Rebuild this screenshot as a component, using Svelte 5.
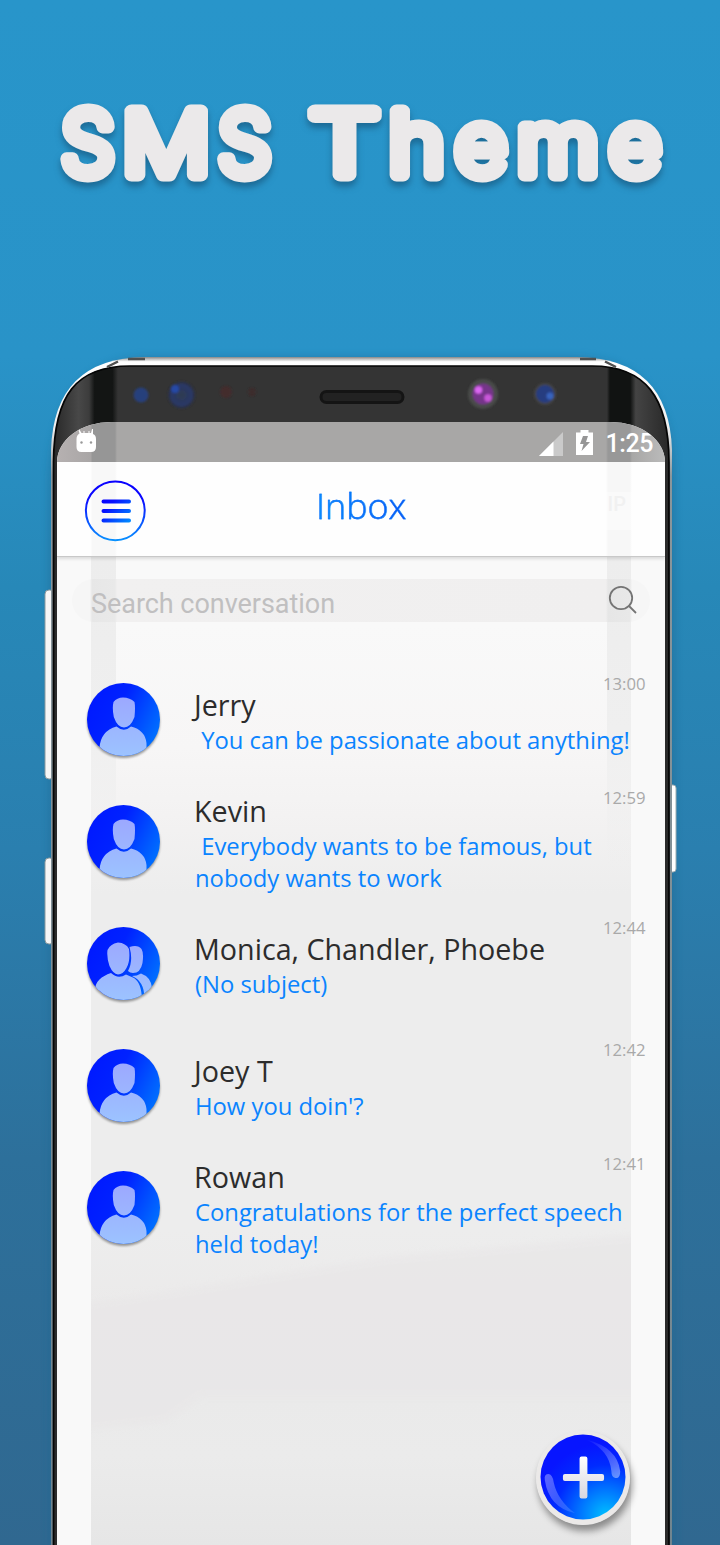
<script>
  const title = [
    { c: 'S', x: 88, s: 0.96 },
    { c: 'M', x: 166.3, s: 1.11 },
    { c: 'S\u00a0', x: 245, s: 0.96 },
    { c: 'T', x: 344.5, s: 1.25 },
    { c: 'h', x: 416.8, s: 1.08 },
    { c: 'e', x: 481, s: 1.03 },
    { c: 'm', x: 557.8, s: 1.07 },
    { c: 'e', x: 635, s: 1.03 }
  ];

  const conversations = [
    { name: 'Jerry', time: '13:00', lines: ['\u00a0You can be passionate about anything!'] },
    { name: 'Kevin', time: '12:59', lines: ['\u00a0Everybody wants to be famous, but', 'nobody wants to work'] },
    { name: 'Monica, Chandler, Phoebe', time: '12:44', lines: ['(No subject)'], group: true },
    { name: 'Joey T', time: '12:42', lines: ["How you doin'?"] },
    { name: 'Rowan', time: '12:41', lines: ['Congratulations for the perfect speech', 'held today!'] }
  ];
</script>

<div class="page">
  <h1>
    <svg width="720" height="357" viewBox="0 0 720 357">
      {#each title as g}
        <text transform="translate({g.x} 175) scale({g.s} 1)" text-anchor={g.c.length > 1 ? 'start' : 'middle'} x={g.c.length > 1 ? -28.2 : 0}>{g.c}</text>
      {/each}
    </svg>
  </h1>

  <svg class="frame" width="720" height="1545" viewBox="0 0 720 1545">
    <defs>
      <linearGradient id="metal" x1="0" x2="0" y1="357" y2="1545" gradientUnits="userSpaceOnUse">
        <stop offset="0" stop-color="#888" /><stop offset=".004" stop-color="#fff" />
        <stop offset=".06" stop-color="#eee" /><stop offset=".1" stop-color="#8b969b" /><stop offset="1" stop-color="#71858f" />
      </linearGradient>
      <linearGradient id="glass" x1="54" x2="669" y1="0" y2="0" gradientUnits="userSpaceOnUse">
        <stop offset="0" stop-color="#292929" /><stop offset=".04" stop-color="#484848" /><stop offset=".057" stop-color="#3c3c3c" />
        <stop offset=".066" stop-color="#131514" /><stop offset=".095" stop-color="#131514" /><stop offset=".104" stop-color="#343434" />
        <stop offset=".899" stop-color="#343434" /><stop offset=".904" stop-color="#111312" /><stop offset=".937" stop-color="#111312" />
        <stop offset=".946" stop-color="#444" /><stop offset="1" stop-color="#282828" />
      </linearGradient>
      <radialGradient id="lens"><stop offset="0" stop-color="#303b50" /><stop offset=".75" stop-color="#293868" /><stop offset="1" stop-color="#292f3d" /></radialGradient>
      <filter id="soft" x="-10%" y="-30%" width="120%" height="160%"><feGaussianBlur stdDeviation="1.2" /></filter>
      <filter id="shade" x="-10%" y="-5%" width="120%" height="110%"><feGaussianBlur stdDeviation="4" /></filter>
    </defs>
    <path d="M49 1560V480Q53 357 150 357H575Q674 358 675 480V1560Z" fill="#1d6690" opacity=".45" filter="url(#shade)" />
    <rect x="45" y="590" width="9" height="189" rx="4" fill="#f6f6f6" stroke="#8a999e" />
    <rect x="45" y="858" width="9" height="86" rx="4" fill="#f6f6f6" stroke="#8a999e" />
    <rect x="668" y="785" width="8" height="87" rx="3" fill="#fff" stroke="#9faeb3" />
    <path d="M51 1560V450Q54 358 145 357H577Q669 358 672 450V1560Z" fill="url(#metal)" />
    <path d="M53.500 1560V462C54 395 76 366 130 366H592C645 366 669 397 669 462V1560Z" fill="url(#glass)" stroke="#050505" stroke-width="1.700" />
    <path d="M107 367L118 361.500M128 359H145M580 359H596M605 361.500L616 367" fill="none" stroke="#505050" stroke-width="2.500" />
    <rect x="321" y="391.500" width="82" height="11" rx="5.500" fill="#222" stroke="#141414" stroke-width="3" />
    <g filter="url(#soft)">
      <circle cx="141" cy="395" r="7.500" fill="#28417c" />
      <circle cx="181.500" cy="395" r="13.500" fill="url(#lens)" />
      <circle cx="175" cy="389" r="4" fill="#2848a5" />
      <circle cx="226" cy="392" r="6" fill="#48282a" opacity=".7" />
      <circle cx="252" cy="392" r="4" fill="#40292a" opacity=".7" />
      <circle cx="483" cy="394" r="15" fill="#484b48" />
      <circle cx="483" cy="394" r="10.500" fill="#76358a" />
      <circle cx="478.500" cy="390" r="3.700" fill="#db66f2" />
      <circle cx="488" cy="398" r="3.700" fill="#c958da" />
      <circle cx="545" cy="394" r="11" fill="#454545" />
      <circle cx="545" cy="394" r="9" fill="#283d80" />
      <circle cx="550" cy="396" r="3.500" fill="#3864bd" />
    </g>
  </svg>

  <main class="screen">
    <svg class="sheen" width="608" height="1123" viewBox="0 0 608 1123">
      <defs>
        <linearGradient id="panel" x1="0" x2="0" y1="0" y2="1123" gradientUnits="userSpaceOnUse">
          <stop offset=".18" stop-color="#f9f9f9" /><stop offset=".29" stop-color="#f7f6f6" /><stop offset=".35" stop-color="#f3f2f2" />
          <stop offset=".42" stop-color="#ededed" /><stop offset=".72" stop-color="#ededed" /><stop offset=".79" stop-color="#ebeaea" />
          <stop offset=".87" stop-color="#eaeaea" /><stop offset=".92" stop-color="#ebebeb" /><stop offset="1" stop-color="#e6e6e6" />
        </linearGradient>
        <linearGradient id="strip" x1="0" x2="0" y1="135" y2="450" gradientUnits="userSpaceOnUse">
          <stop offset="0" stop-color="#ededed" /><stop offset=".55" stop-color="#efefef" /><stop offset="1" stop-color="#ededed" stop-opacity="0" />
        </linearGradient>
        <filter id="edge"><feGaussianBlur stdDeviation="3" /></filter>
        <clipPath id="inner"><rect x="34" y="135" width="540" height="988" /></clipPath>
      </defs>
      <rect x="34" y="135" width="540" height="988" fill="url(#panel)" />
      <g clip-path="url(#inner)"><path d="M20 882L120 868L330 835L590 812V975H145L110 1000L20 1010Z" fill="#e8e6e7" opacity=".6" filter="url(#edge)" /></g>
      <rect x="34" y="135" width="25" height="315" fill="url(#strip)" />
      <rect x="550" y="135" width="24" height="315" fill="url(#strip)" />
    </svg>

    <div class="status">
      <svg class="robot" width="20" height="24" viewBox="0 0 20 24">
        <path d="M3 0l2.500 4h2V2h1v2h4V2h1v2h1.500L16 0h1v5q3 1 3 5v8q0 5-5 5H5.500q-5 0-5-5v-8q0-4 3-5.500L2.500 1z" fill="#fff" />
        <circle cx="5.500" cy="13.500" r="1.200" fill="#999" /><circle cx="15" cy="13.500" r="1.200" fill="#999" />
      </svg>
      <svg width="24" height="24" viewBox="0 0 24 24"><path d="M24 0V24H0Z" fill="#cacaca" /><path d="M14.500 9.500V24H0Z" fill="#fff" /></svg>
      <svg class="battery" width="17" height="25" viewBox="0 0 17 25"><path d="M0 2.500H4.500V0H12.500V2.500H17V25H0Z" fill="#fff" /><path d="M7 6h5l-2 6h4L5.500 21l2-7H4z" fill="#969696" /></svg>
      <span>1:25</span>
    </div>

    <header>
      <svg class="menu" width="62" height="62" viewBox="0 0 62 62" fill="none">
        <defs>
          <linearGradient id="ink" x1="0" x2="0" y1="0" y2="62" gradientUnits="userSpaceOnUse"><stop stop-color="#0900ff" /><stop offset=".3" stop-color="#0b09ff" /><stop offset="1" stop-color="#0896ff" /></linearGradient>
          <linearGradient id="bars" x1="17" x2="44" y1="18" y2="44" gradientUnits="userSpaceOnUse"><stop stop-color="#0900ff" /><stop offset=".3" stop-color="#0710ff" /><stop offset="1" stop-color="#008cff" /></linearGradient>
        </defs>
        <circle cx="31.300" cy="30.800" r="29.400" stroke="url(#ink)" stroke-width="2" />
        <path d="M19.500 21.500H45M19.500 31H45M19.500 40.500H45" stroke="url(#bars)" stroke-width="4" stroke-linecap="round" />
      </svg>
      <h2>Inbox</h2>
      <span class="badge"><b>IP</b></span>
    </header>

    <div class="search">
      <span>Search conversation</span>
      <svg width="30" height="30" viewBox="0 0 30 30" fill="none" stroke="#747474" stroke-width="1.800"><circle cx="13" cy="13" r="11.200" /><path d="M20.500 20.500L28 28" /></svg>
    </div>

    <ul>
      {#each conversations as c}
        <li class:double={c.lines.length > 1}>
          <svg class="avatar" width="75" height="77" viewBox="-1 -1 75 77">
            <defs>
              <linearGradient id="blue" x1="0" y1=".2" x2="1" y2=".7"><stop stop-color="#0018ff" /><stop offset=".4" stop-color="#0022ff" /><stop offset="1" stop-color="#0073ff" /></linearGradient>
              <linearGradient id="skin" x1="0" x2="0" y1="14" y2="73" gradientUnits="userSpaceOnUse"><stop stop-color="#9ca8ff" /><stop offset="1" stop-color="#9cc3ff" /></linearGradient>
              <clipPath id="round"><circle cx="36.500" cy="36.500" r="36.500" /></clipPath>
            </defs>
            <circle cx="36.500" cy="36.500" r="36.500" fill="url(#blue)" />
            <g clip-path="url(#round)" fill="url(#skin)">
              {#if c.group}
                <path d="M42.500 20Q51 17.500 54.500 22Q57 26 55.500 36Q53.500 46 46 46Q43 46 41 44Q46.500 34 42.500 20ZM45 49Q50 49 54 46.500Q64 50 65 61V75H57Q59 55 45 49Z" />
                <path d="M20.500 23Q23 17 31 15.500Q39 16 42 22Q43.500 34 39.500 41Q36 47.500 31 47.500Q26 47 22.500 39Q19.500 30 20.500 23ZM24 46Q31 52.500 39 47.500L47 51Q55 56 55 75H8V62Q9 51 24 46Z" />
              {:else}
                <path d="M26.500 19Q30 14.500 36 14.500Q43 14.500 47.500 19Q48.500 24 47.500 34Q43.500 44.500 37 44.500Q30.500 44.500 26.800 34Q25 25 26.500 19ZM29.500 43.500Q37 50 44 43.500Q58 47 59.500 60V75H12.500V65Q13.500 48 29.500 43.500Z" />
              {/if}
            </g>
          </svg>
          <div class="copy">
            <strong>{c.name}</strong>
            {#each c.lines as line}<p>{line}</p>{/each}
          </div>
          <time>{c.time}</time>
        </li>
      {/each}
    </ul>

    <button class="fab" aria-label="New conversation">
      <svg width="94" height="94" viewBox="0 0 96 96">
        <defs>
          <radialGradient id="orb" cx=".77" cy=".95" r=".85"><stop stop-color="#00bfff" /><stop offset=".35" stop-color="#0077ff" /><stop offset=".7" stop-color="#002bff" /><stop offset="1" stop-color="#0715ff" /></radialGradient>
          <linearGradient id="plus" x1="0" x2="0" y1="0" y2="1"><stop stop-color="#fff" /><stop offset="1" stop-color="#d6d6df" /></linearGradient>
          <linearGradient id="gloss" x1="0" y1="0" x2="1" y2="1"><stop stop-color="#fff" stop-opacity=".35" /><stop offset="1" stop-color="#fff" stop-opacity=".12" /></linearGradient>
          <linearGradient id="gloss2" x1="0" y1="0" x2="1" y2="1"><stop stop-color="#fff" stop-opacity=".02" /><stop offset="1" stop-color="#fff" stop-opacity=".42" /></linearGradient>
        </defs>
        <circle cx="48" cy="48" r="47.500" fill="#ebe9e8" />
        <circle cx="48" cy="47" r="43.400" fill="url(#orb)" />
        <path d="M9 50Q8 44 13 44Q17 45 18 52Q22 71 40 84Q13 78 9 50Z" fill="url(#gloss)" />
        <path d="M52 9Q83 17 86 41Q86 49 81 48Q77 47 77 41Q75 20 52 9Z" fill="url(#gloss2)" />
        <path d="M46.500 26h4q2 0 2 2v16h15q2 0 2 2v3q0 2-2 2H52.500v16q0 2-2 2h-4q-2 0-2-2V51H29.500q-2 0-2-2v-3q0-2 2-2h15V28q0-2 2-2Z" fill="url(#plus)" />
      </svg>
    </button>
  </main>
</div>

<style>
  :global(body) { margin: 0; }
  * { box-sizing: border-box; }
  .page { position: relative; width: 720px; height: 1545px; overflow: hidden; display: flex; flex-direction: column; align-items: flex-start; background: linear-gradient(#2895ca 0, #2993c8 23%, #2788b8 38%, #2a7faf 55%, #2d709b 75%, #306890 100%); font-family: "Open Sans", "Noto Sans", sans-serif; }
  h1 { margin: 0; height: 422px; flex: none; font-size: 88px; line-height: 1; }
  h1 svg { filter: drop-shadow(0 5px 3px rgba(15, 65, 100, .5)); }
  h1 text { font: 300 88px Inter, sans-serif; fill: #ebe9ea; stroke: #ebe9ea; stroke-width: 13; stroke-linejoin: round; }
  .frame { position: absolute; left: 0; top: 0; }
  .screen { position: relative; width: 608px; height: 1123px; margin-left: 57px; overflow: hidden; border-radius: 54px 54px 0 0 / 40px 40px 0 0; background: #f9f9f9; }
  .sheen { position: absolute; left: 0; top: 0; }
  .status { position: relative; height: 40px; display: flex; align-items: center; padding: 3px 12px 0 19px; color: #fff; font: 500 25px Roboto, sans-serif; background: linear-gradient(90deg, #b6b1b1 0, #a9a6a6 34px, #969696 35px, #969696 58px, #a8a7a6 60px, #a8a7a6 549px, #989898 551px, #989898 573px, #a8a7a6 575px, #bbb 608px); }
  .robot { margin: -5px auto 0 0; }
  .battery { margin: -3px 12px 0 13px; }
  .status span { line-height: 36px; letter-spacing: -.4px; }
  header { position: relative; height: 95px; display: flex; align-items: flex-start; background: linear-gradient(90deg, #fefefe 34px, #f8f8f8 35px, #f8f8f8 58px, #fefefe 60px, #fefefe 549px, #f7f7f7 551px, #f7f7f7 573px, #fefefe 575px); border-bottom: 1px solid #c8c8c8; box-shadow: 0 2px 3px rgba(0, 0, 0, .12); }
  .menu { margin: 18px 0 0 27px; flex: none; }
  h2 { margin: 17px 0 0 170px; width: 94px; font-size: 35.800px; line-height: 52px; font-weight: 300; white-space: nowrap; background: linear-gradient(90deg, #0890ff, #0055f4); background-clip: text; color: transparent; -webkit-text-stroke: .4px #0a70fa; }
  .badge { margin: 30px 0 0 166px; width: 58px; height: 38px; background: rgba(255, 255, 255, .35); text-align: right; padding-right: 8px; font: 20px Roboto, sans-serif; color: #f1f1f1; }
  .badge b { font-weight: 500; }
  .search { position: relative; width: 578px; height: 43px; margin: 22px 0 0 15px; padding: 0 12px 0 19px; display: flex; align-items: center; justify-content: space-between; border-radius: 22px; background: linear-gradient(90deg, #f6f6f6 18px, #e7e7e7 20px, #e9e9e9 43px, #f1f0f0 45px, #f0efef 534px, #e6e6e6 536px, #e8e8e8 558px, #f6f6f6 560px); color: #c0bfc0; font: 27px Roboto, sans-serif; }
  .search span { padding-top: 6px; letter-spacing: -.04px; }
  .search svg { margin-top: -1px; }
  ul { position: relative; list-style: none; margin: 37px 0 0; padding: 0; display: flex; flex-direction: column; }
  li { height: 122px; display: flex; padding: 0 19.500px 0 29px; }
  .avatar { margin-top: 23px; flex: none; filter: drop-shadow(0 2px 1px rgba(40, 40, 40, .45)); }
  .copy { flex: 1; width: 0; padding: 26px 0 0 33px; white-space: nowrap; }
  .double .copy { padding-top: 10px; }
  strong { display: block; font-size: 28.700px; line-height: 40px; color: #2c2c2c; font-weight: 400; }
  p { margin: -1px 0 0 1px; font-size: 23.800px; line-height: 32px; color: #0a84ff; }
  p + p { margin-top: 0; }
  time { width: 0; direction: rtl; padding-top: 14px; font-size: 16.700px; line-height: 22px; color: #a9a9a9; }
  .double time { padding-top: 6px; }
  .fab { position: absolute; left: 479px; top: 1009px; width: 94px; height: 94px; padding: 0; border: 0; border-radius: 50%; background: none; box-shadow: 2px 6px 7px rgba(0, 0, 0, .4); }
  .fab svg { display: block; }
</style>
